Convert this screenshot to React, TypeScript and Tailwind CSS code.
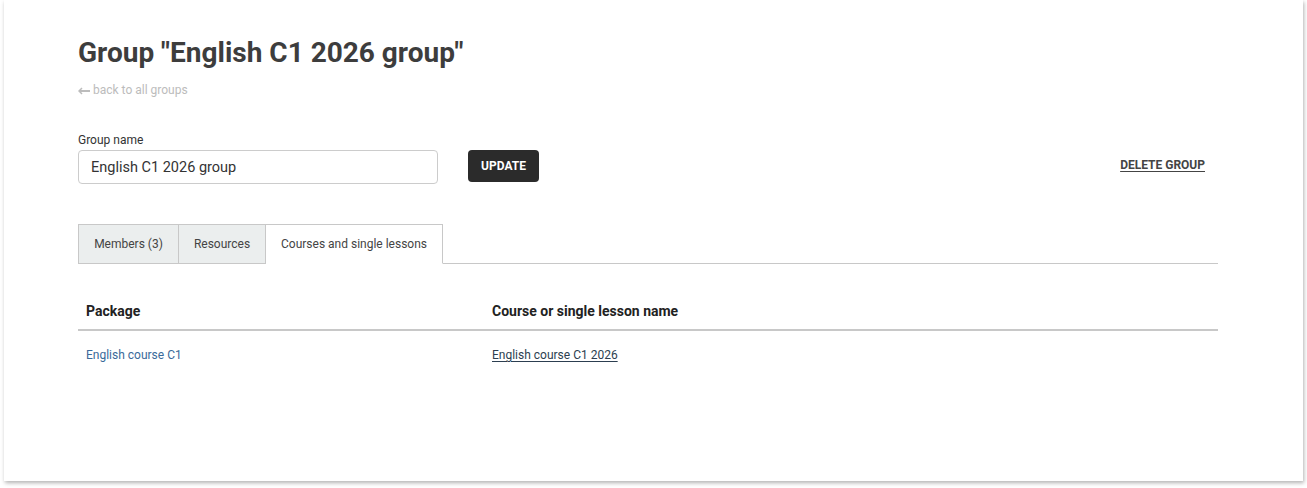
export default function App() {
    return (
        <div className="h-[488px] w-[1307px] bg-white pl-[4px] font-['Roboto',sans-serif]">
            <div className="h-[481px] w-[1299px] bg-white pl-[74px] pt-[36px] shadow-[1px_2px_4px_rgba(0,0,0,0.3)]">
                <div className="w-[1140px]">
                    <h1 className="text-[28px] leading-[34px] font-bold text-[#3d3d3d]">
                        Group "English C1 2026 group"
                    </h1>
                    <a className="mt-[13px] flex items-center gap-[3px] text-[12px] leading-[14px] text-[#bcbcbc]">
                        <svg width="12" height="8" viewBox="0 0 12 8" className="mt-[1px]">
                            <path d="M12 4H2" stroke="#bcbcbc" strokeWidth="2" />
                            <path d="M4 1L1 4l3 3" stroke="#bcbcbc" strokeWidth="1.5" fill="none" />
                        </svg>
                        back to all groups
                    </a>

                    <div className="mt-[36px] flex items-end">
                        <div className="flex flex-col">
                            <label className="text-[12px] leading-[14px] text-[#333]">Group name</label>
                            <input
                                className="mt-[3px] h-[34px] w-[360px] rounded-[4px] border border-[#ccc] px-[12px] text-[14.5px] text-[#333] outline-none"
                                defaultValue="English C1 2026 group"
                            />
                        </div>
                        <button className="mb-[2px] ml-[30px] h-[32px] w-[71px] rounded-[4px] bg-[#2b2b2b] text-[12px] font-bold text-white">
                            UPDATE
                        </button>
                        <a className="mb-[10px] ml-auto mr-[13px] text-[12px] font-bold text-[#444] underline underline-offset-2">
                            DELETE GROUP
                        </a>
                    </div>

                    <div className="mt-[40px] flex border-b border-[#c8c8c8]">
                        <div className="-mb-px flex h-[40px] w-[101px] items-center justify-center border border-[#c8c8c8] bg-[#ebeeee] pb-px text-[12px] text-[#444]">
                            Members (3)
                        </div>
                        <div className="-mb-px flex h-[40px] w-[87px] items-center justify-center border border-l-0 border-[#c8c8c8] bg-[#ebeeee] pb-px text-[12px] text-[#444]">
                            Resources
                        </div>
                        <div className="-mb-px flex h-[40px] w-[177px] items-center justify-center border border-l-0 border-[#c8c8c8] border-b-white bg-white pb-px text-[12px] text-[#444]">
                            Courses and single lessons
                        </div>
                    </div>

                    <table className="mt-[37px] w-full text-left">
                        <thead>
                            <tr className="border-b-2 border-[#c8c8c8]">
                                <th className="w-[406px] px-[8px] pb-[7px] text-[14px] font-bold text-[#222]">Package</th>
                                <th className="px-[8px] pb-[7px] text-[14px] font-bold text-[#222]">Course or single lesson name</th>
                            </tr>
                        </thead>
                        <tbody>
                            <tr>
                                <td className="px-[8px] pt-[15px] text-[12px] text-[#3a6a9a]">English course C1</td>
                                <td className="px-[8px] pt-[15px] text-[12px] text-[#2c3e50] underline underline-offset-2">
                                    English course C1 2026
                                </td>
                            </tr>
                        </tbody>
                    </table>
                </div>
            </div>
        </div>
    )
}
